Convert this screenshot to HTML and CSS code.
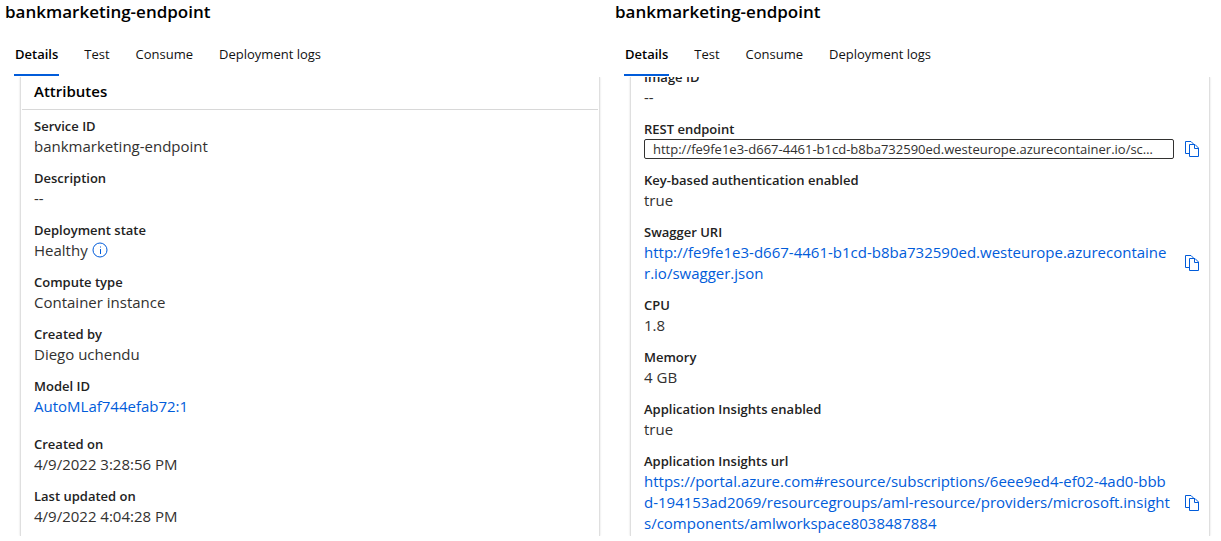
FILE: index.html
```
<!DOCTYPE html>
<html lang="en">
<head>
<meta charset="utf-8">
<title>bankmarketing-endpoint</title>
<link rel="stylesheet" href="styles.css">
</head>
<body>
<svg class="sprite" aria-hidden="true">
  <symbol id="copy" viewBox="0 0 16 16">
    <path d="M6.500 12.500H2.500V.500H8L10.500 3M6.500 3.500H12L15.500 7V15.500H6.500ZM11.500 4V7.500H15" fill="none" stroke="currentColor"/>
  </symbol>
</svg>
<main class="split">
  <section class="pane">
    <h1 class="title">bankmarketing-endpoint</h1>
    <nav class="tabs">
      <a class="tab tab-active" href="#details">Details</a>
      <a class="tab" href="#test">Test</a>
      <a class="tab" href="#consume">Consume</a>
      <a class="tab" href="#logs">Deployment logs</a>
    </nav>
    <div class="viewport">
      <div class="card">
        <h2 class="card-title">Attributes</h2>
        <dl class="list">
          <div class="item"><dt>Service ID</dt><dd>bankmarketing-endpoint</dd></div>
          <div class="item"><dt>Description</dt><dd>--</dd></div>
          <div class="item"><dt>Deployment state</dt><dd class="status">Healthy
            <button class="icon-button" aria-label="Deployment state info"><svg class="info" viewBox="0 0 16 16"><circle cx="8" cy="7" r="7" fill="none" stroke="currentColor"/><path d="M8.500 6V11M8.500 3.500V4.500" stroke="currentColor"/></svg></button></dd></div>
          <div class="item"><dt>Compute type</dt><dd>Container instance</dd></div>
          <div class="item"><dt>Created by</dt><dd>Diego uchendu</dd></div>
          <div class="item item-model"><dt>Model ID</dt><dd><a class="link" href="#model">AutoMLaf744efab72:1</a></dd></div>
          <div class="item"><dt>Created on</dt><dd>4/9/2022 3:28:56 PM</dd></div>
          <div class="item"><dt>Last updated on</dt><dd>4/9/2022 4:04:28 PM</dd></div>
        </dl>
      </div>
    </div>
  </section>
  <section class="pane">
    <h1 class="title">bankmarketing-endpoint</h1>
    <nav class="tabs">
      <a class="tab tab-active" href="#details">Details</a>
      <a class="tab" href="#test">Test</a>
      <a class="tab" href="#consume">Consume</a>
      <a class="tab" href="#logs">Deployment logs</a>
    </nav>
    <div class="viewport">
      <div class="card card-end">
        <dl class="list">
          <div class="item"><dt>Image ID</dt><dd>--</dd></div>
          <div class="item"><dt><label for="rest">REST endpoint</label></dt><dd class="copy-row">
            <input class="field" id="rest" readonly value="http://fe9fe1e3-d667-4461-b1cd-b8ba732590ed.westeurope.azurecontainer.io/score">
            <button class="icon-button" aria-label="Copy REST endpoint"><svg class="copy"><use href="#copy"/></svg></button></dd></div>
          <div class="item"><dt>Key-based authentication enabled</dt><dd>true</dd></div>
          <div class="item"><dt>Swagger URI</dt><dd class="copy-row">
            <a class="link url" href="#swagger">http://fe9fe1e3-d667-4461-b1cd-b8ba732590ed.westeurope.azurecontaine<br>r.io/swagger.json</a>
            <button class="icon-button" aria-label="Copy Swagger URI"><svg class="copy"><use href="#copy"/></svg></button></dd></div>
          <div class="item"><dt>CPU</dt><dd>1.8</dd></div>
          <div class="item"><dt>Memory</dt><dd>4 GB</dd></div>
          <div class="item"><dt>Application Insights enabled</dt><dd>true</dd></div>
          <div class="item"><dt>Application Insights url</dt><dd class="copy-row">
            <a class="link url" href="#insights">https://portal.azure.com#resource/subscriptions/6eee9ed4-ef02-4ad0-bbb<br>d-194153ad2069/resourcegroups/aml-resource/providers/microsoft.insight<br>s/components/amlworkspace8038487884</a>
            <button class="icon-button" aria-label="Copy Application Insights url"><svg class="copy"><use href="#copy"/></svg></button></dd></div>
        </dl>
      </div>
    </div>
  </section>
</main>
</body>
</html>
```
FILE: styles.css
```
* { box-sizing: border-box; }
body {
  margin: 0;
  background: #fff;
  color: #323130;
  font-family: "Segoe UI", "Open Sans", "Noto Sans", sans-serif;
  font-size: 15px;
  line-height: 21px;
}
.sprite { position: absolute; width: 0; height: 0; }
.split {
  display: grid;
  grid-template-columns: 1fr 1fr;
  grid-template-rows: minmax(0, 1fr);
  height: 100vh;
  padding-right: 1px;
}
.pane { display: flex; flex-direction: column; min-width: 0; padding-bottom: 5px; }
.title { margin: 0; padding-left: 5px; font-size: 17px; line-height: 24px; font-weight: 600; color: #000; }
.tabs { display: flex; gap: 24px; padding: 9px 0 0 14px; }
.tab {
  padding: 11px 1px 9px;
  border-bottom: 2px solid transparent;
  color: #111;
  font-size: 13px;
  line-height: 21px;
  text-decoration: none;
}
.tab-active { border-color: #015cda; font-weight: 600; color: #000; }
.viewport { flex: 1; min-height: 0; overflow: hidden; padding: 0 10px 0 20px; margin-top: 1px; }
.card {
  display: flex;
  flex-direction: column;
  height: 100%;
  border: solid #dfdfdf;
  border-width: 0 1px;
  box-shadow: 0 0 2px #ddd;
}
.card-end { justify-content: flex-end; overflow: hidden; }
.card-title {
  margin: 0 1px;
  padding: 4px 12px 7px;
  border-bottom: 1px solid #d8d8d8;
  font-size: 15px;
  line-height: 21px;
  font-weight: 600;
  color: #000;
}
.list { display: flex; flex-direction: column; gap: 11px; margin: 0; padding: 6px 10px 2px 13px; }
.item-model { padding-bottom: 6px; }
dt { font-size: 13px; line-height: 20px; font-weight: 600; color: #222; }
dd { margin: 0; }
.status { display: flex; align-items: center; gap: 4px; }
.link { color: #015cda; text-decoration: none; }
.copy-row { display: flex; align-items: center; gap: 9px; }
.url { flex: 1; min-width: 0; white-space: nowrap; }
.field {
  flex: 1;
  min-width: 0;
  height: 20px;
  padding: 0 14px 0 8px;
  border: 1px solid #323130;
  border-radius: 2px;
  background: #fff;
  color: #323130;
  font: inherit;
  font-size: 13px;
  text-overflow: ellipsis;
}
.icon-button { display: flex; padding: 0; border: 0; background: none; color: #015cda; }
.copy, .info { width: 16px; height: 16px; overflow: visible; }
```
